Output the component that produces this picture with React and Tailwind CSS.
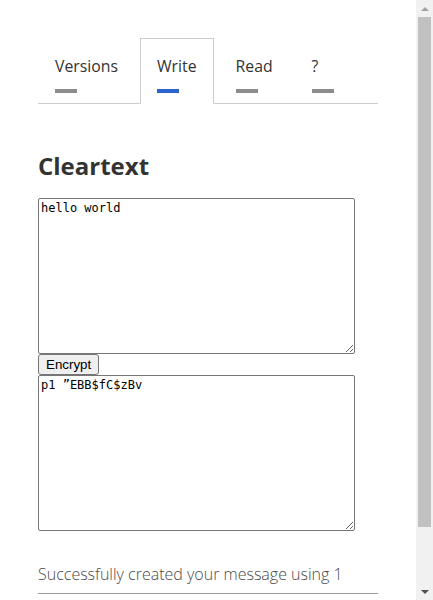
export default function App() {
  const tabs = [
    { label: "Versions", active: false },
    { label: "Write", active: true },
    { label: "Read", active: false },
    { label: "?", active: false },
  ];
  return (
    <div className="flex h-[600px] w-full overflow-hidden bg-white font-['Open_Sans',sans-serif] text-[#333]">
      <div className="min-w-0 flex-1 overflow-hidden">
        <div className="ml-[38px] w-[340px] pb-[80px] pt-[38px]">
          <div className="flex border-b border-[#ccc]">
            {tabs.map((t) =>
              t.active ? (
                <div
                  key={t.label}
                  className="-mb-px mr-[5px] flex h-[66px] flex-col border border-[#ccc] border-b-white bg-white px-4 pt-[15px]"
                >
                  <span className="text-[15.8px] leading-6">{t.label}</span>
                  <span className="mt-[11px] block h-1 w-[22px] bg-[#2a64cc]" />
                </div>
              ) : (
                <div
                  key={t.label}
                  className="-mb-px mr-[5px] flex h-[66px] flex-col border border-transparent px-4 pt-[15px]"
                >
                  <span className="text-[15.8px] leading-6">{t.label}</span>
                  <span className="mt-[11px] block h-1 w-[22px] bg-[#8c8c8c]" />
                </div>
              )
            )}
          </div>

          <h1 className="mt-[46px] text-[24px] font-bold leading-[32px]">Cleartext</h1>

          <div className="mt-[16px] flex flex-col items-start">
            <textarea
              className="block h-[156px] w-[317px] resize rounded-[2px] border border-[#767676] p-[2px] font-['DejaVu_Sans_Mono',monospace] text-[12px] leading-[14px] text-black outline-none"
              defaultValue="hello world"
            />
            <button className="flex h-[21px] items-center rounded-[3px] border border-[#767676] bg-[#efefef] px-[7px] font-['Liberation_Sans',Arial,sans-serif] text-[13.33px] leading-[15px] text-black">
              Encrypt
            </button>
            <textarea
              className="block h-[156px] w-[317px] resize rounded-[2px] border border-[#767676] p-[2px] font-['DejaVu_Sans_Mono',monospace] text-[12px] leading-[14px] text-black outline-none"
              defaultValue={"p1 \u201DEBB$fC$zBv"}
            />
          </div>

          <div className="mt-[31px] border-b border-[#999] pb-[7px]">
            <p className="text-[16px] font-light leading-[24px] text-[#4a4a4a]">
              Successfully created your message using 1
            </p>
          </div>
        </div>
      </div>

      <div className="flex w-[17px] shrink-0 flex-col bg-[#f1f1f1]">
        <div className="flex h-[17px] items-center justify-center">
          <svg width="8" height="4" viewBox="0 0 8 4">
            <path d="M0 4 L4 0 L8 4 Z" fill="#a3a3a3" />
          </svg>
        </div>
        <div className="flex-1 px-[2px]">
          <div className="h-[510px] bg-[#c1c1c1]" />
        </div>
        <div className="flex h-[17px] items-center justify-center">
          <svg width="8" height="4" viewBox="0 0 8 4">
            <path d="M0 0 L8 0 L4 4 Z" fill="#505050" />
          </svg>
        </div>
      </div>
    </div>
  );
}
